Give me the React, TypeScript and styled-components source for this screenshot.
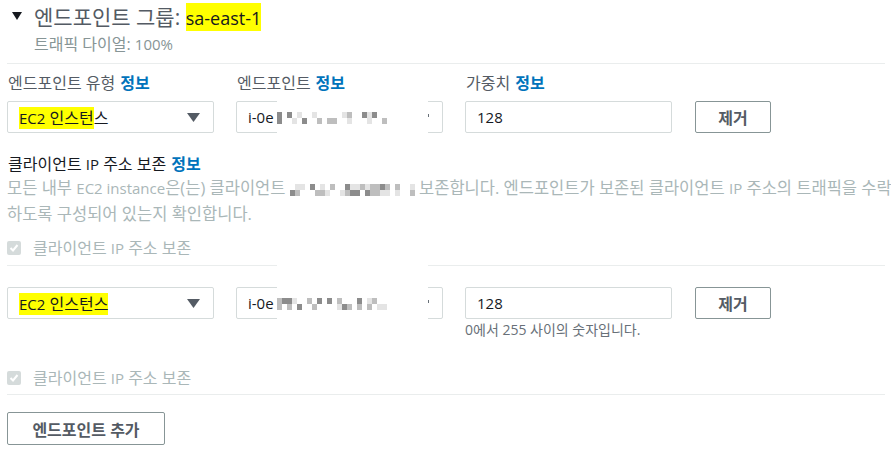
import React from 'react';
import styled, { createGlobalStyle } from 'styled-components';

const GlobalStyle = createGlobalStyle`
  html, body {
    margin: 0;
    padding: 0;
    background: #fff;
  }
  body {
    font-family: "Open Sans", "Noto Sans CJK KR", sans-serif;
    color: #16191f;
  }
`;

// light noise used where the original screenshot was blurred out
const noise = (seed: number, count: number) => {
  const out: number[] = [];
  let s = seed;
  for (let i = 0; i < count; i++) {
    s = (s * 9301 + 49297) % 233280;
    const r = s / 233280;
    out.push(r < 0.45 ? 255 : r < 0.7 ? 228 : r < 0.88 ? 190 : 140);
  }
  return out;
};

const Page = styled.div`
  width: 891px;
  padding: 3px 6px 0 7px;
  box-sizing: border-box;
`;

const GroupHeader = styled.div`
  display: flex;
  align-items: center;
  gap: 12px;
  padding-left: 5px;
  height: 26px;
  font-size: 21px;
  color: #545b64;
  white-space: nowrap;
`;

const Highlight = styled.span`
  background: #ffff00;
  color: #16191f;
`;

// latin runs are a touch smaller than the hangul around them
const Lat = styled.span<{ $size?: number }>`
  font-size: ${p => p.$size ?? 15}px;
`;

const SubTitle = styled.div`
  padding-left: 27px;
  margin-top: 6px;
  font-size: 16px;
  line-height: 18px;
  color: #879596;
`;

const Divider = styled.div<{ $gap: number }>`
  border-top: 1px solid #eaeded;
  margin-top: ${p => p.$gap}px;
`;

const FieldRow = styled.div<{ $top: number }>`
  display: grid;
  grid-template-columns: 207px 207px 207px auto;
  column-gap: 22px;
  margin-top: ${p => p.$top}px;
  align-items: start;
`;

const Label = styled.div`
  font-size: 16px;
  line-height: 20px;
  color: #545b64;
  margin-bottom: 8px;
  padding-left: 1px;
  white-space: nowrap;
`;

const Info = styled.span`
  color: #0073bb;
  font-weight: 700;
  margin-left: 5px;
`;

const Box = styled.div`
  position: relative;
  height: 32px;
  box-sizing: border-box;
  border: 1px solid #d5dbdb;
  border-radius: 2px;
  display: flex;
  align-items: center;
  padding: 0 13px 0 11px;
  font-size: 16px;
  color: #16191f;
`;

const BoxText = styled.span`
  flex: 1;
  white-space: nowrap;
`;

const Redact = styled.span<{ $up: number }>`
  position: absolute;
  left: 40px;
  width: 151px;
  top: ${p => -p.$up}px;
  bottom: -2px;
  background: #fff;
  display: flex;
  align-items: flex-end;
  padding-bottom: 10px;
  box-sizing: border-box;
`;

const Noise = styled.span`
  display: inline-grid;
  grid-template-rows: repeat(2, 6px);
  grid-auto-flow: column;
  grid-auto-columns: 5px;
  vertical-align: middle;
`;

const Cell = styled.span<{ $v: number }>`
  background: rgb(${p => p.$v}, ${p => p.$v}, ${p => p.$v});
`;

const Pixels = ({ seed, count }: { seed: number; count: number }) => (
  <Noise>
    {noise(seed, count).map((v, i) => (
      <Cell key={i} $v={v} />
    ))}
  </Noise>
);

const Caret = ({ small }: { small?: boolean }) =>
  small ? (
    <svg width="7" height="6" viewBox="0 0 7 6">
      <rect x="0" y="0" width="7" height="3" fill="#687078" />
      <rect x="2" y="3" width="3" height="2" fill="#879596" />
    </svg>
  ) : (
    <svg width="13" height="9" viewBox="0 0 13 9">
      <polygon points="0,0 13,0 6.5,9" fill="#545b64" />
    </svg>
  );

const RemoveButton = styled.button`
  margin-left: 1px;
  width: 76px;
  height: 32px;
  box-sizing: border-box;
  border: 1px solid #879596;
  border-radius: 2px;
  background: #fff;
  font-family: inherit;
  font-size: 16px;
  font-weight: 700;
  color: #545b64;
  cursor: pointer;
`;

const Hint = styled.div`
  font-size: 14px;
  line-height: 16px;
  color: #687078;
  margin-top: 3px;
  white-space: nowrap;
`;

const SectionTitle = styled.div`
  margin-top: 21px;
  font-size: 16px;
  line-height: 20px;
  color: #16191f;
  padding-left: 1px;
`;

const Description = styled.div`
  margin-top: 1px;
  font-size: 16.5px;
  line-height: 25px;
  color: #aab7b8;
  white-space: nowrap;
`;

const CheckRow = styled.div<{ $top: number }>`
  display: flex;
  align-items: center;
  gap: 12px;
  margin-top: ${p => p.$top}px;
  font-size: 16px;
  line-height: 20px;
  color: #aab7b8;
`;

const CheckBox = styled.span`
  width: 14px;
  height: 14px;
  border-radius: 2px;
  background: #d5dbdb;
  display: inline-flex;
  align-items: center;
  justify-content: center;
`;

const AddButton = styled.button`
  margin-top: 17px;
  width: 158px;
  height: 33px;
  box-sizing: border-box;
  border: 1px solid #879596;
  border-radius: 2px;
  background: #fff;
  font-family: inherit;
  font-size: 16px;
  font-weight: 700;
  color: #545b64;
`;

const Check = () => (
  <CheckBox>
    <svg width="10" height="10" viewBox="0 0 10 10">
      <polyline points="1.5,5 4,7.5 8.5,2" fill="none" stroke="#fff" strokeWidth="2" />
    </svg>
  </CheckBox>
);

type RowProps = {
  top: number;
  labels?: boolean;
  highlight: React.ReactNode;
  rest?: string;
  seed: number;
  up: number;
  hint?: boolean;
};

const EndpointRow = ({ top, labels, highlight, rest, seed, up, hint }: RowProps) => (
  <FieldRow $top={top}>
    <div>
      {labels && (
        <Label>
          엔드포인트 유형<Info>정보</Info>
        </Label>
      )}
      <Box>
        <BoxText>
          <Highlight>{highlight}</Highlight>
          {rest}
        </BoxText>
        <Caret />
      </Box>
    </div>
    <div>
      {labels && (
        <Label>
          엔드포인트<Info>정보</Info>
        </Label>
      )}
      <Box>
        <BoxText>
          <Lat>i-0e</Lat>
        </BoxText>
        <Redact $up={up}>
          <Pixels seed={seed} count={44} />
        </Redact>
        <Caret small />
      </Box>
    </div>
    <div>
      {labels && (
        <Label>
          가중치<Info>정보</Info>
        </Label>
      )}
      <Box>
        <BoxText>
          <Lat>128</Lat>
        </BoxText>
      </Box>
      {hint && <Hint>0에서 255 사이의 숫자입니다.</Hint>}
    </div>
    <div>
      {labels && <Label>&nbsp;</Label>}
      <RemoveButton>제거</RemoveButton>
    </div>
  </FieldRow>
);

export default function App() {
  return (
    <Page>
      <GlobalStyle />
      <GroupHeader>
        <svg width="10" height="8" viewBox="0 0 10 8">
          <polygon points="0,0 10,0 5,8" fill="#16191f" />
        </svg>
        <span>
          엔드포인트 그룹: <Highlight><Lat $size={18}>sa-east-1</Lat></Highlight>
        </span>
      </GroupHeader>
      <SubTitle>
        트래픽 다이얼: <Lat>100%</Lat>
      </SubTitle>
      <Divider $gap={10} />

      <EndpointRow
        top={9}
        labels
        highlight={<><Lat>EC2</Lat> 인스턴</>}
        rest="스"
        seed={17}
        up={2}
      />

      <SectionTitle>
        클라이언트 <Lat>IP</Lat> 주소 보존<Info>정보</Info>
      </SectionTitle>
      <Description>
        모든 내부 <Lat>EC2 instance</Lat>은(는) 클라이언트 <Pixels seed={5} count={50} /> 보존합니다. 엔드포인트가 보존된 클라이언트 <Lat>IP</Lat> 주소의 트래픽을 수락
        <br />
        하도록 구성되어 있는지 확인합니다.
      </Description>
      <CheckRow $top={12}>
        <Check />
        <span>
          클라이언트 <Lat>IP</Lat> 주소 보존
        </span>
      </CheckRow>
      <Divider $gap={7} />

      <EndpointRow
        top={21}
        highlight={<><Lat>EC2</Lat> 인스턴스</>}
        seed={91}
        up={28}
        hint
      />

      <CheckRow $top={30}>
        <Check />
        <span>
          클라이언트 <Lat>IP</Lat> 주소 보존
        </span>
      </CheckRow>
      <Divider $gap={6} />

      <AddButton>엔드포인트 추가</AddButton>
    </Page>
  );
}
